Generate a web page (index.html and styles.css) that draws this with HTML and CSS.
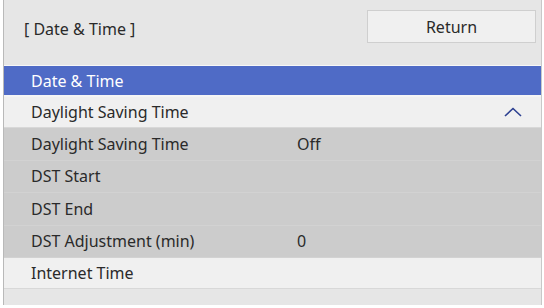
FILE: index.html
```html
<!doctype html>
<html lang="en">
    <head>
        <meta charset="UTF-8" />
        <title>Date &amp; Time</title>
        <link rel="stylesheet" href="styles.css">
    </head>
    <body>
        <div class="panel">
            <div class="header">
                <span class="title">[ Date &amp; Time ]</span>
                <button class="return">Return</button>
            </div>
            <div class="row selected">Date &amp; Time</div>
            <div class="row open">
                <span>Daylight Saving Time</span>
                <svg class="chevron" width="18" height="10" viewBox="0 0 18 10">
                    <path d="M1 9 L9 1.5 L17 9" fill="none" stroke="#2d4191" stroke-width="1.6" />
                </svg>
            </div>
            <div class="sub">
                <div class="row item"><span class="label">Daylight Saving Time</span><span class="value">Off</span></div>
                <div class="row item"><span class="label">DST Start</span></div>
                <div class="row item"><span class="label">DST End</span></div>
                <div class="row item"><span class="label">DST Adjustment (min)</span><span class="value">0</span></div>
            </div>
            <div class="row">Internet Time</div>
            <div class="footer"></div>
        </div>
    </body>
</html>
```

FILE: styles.css
```css
body {
    margin: 0;
    background-color: #ffffff;
    font-family: "Noto Sans", "Open Sans", sans-serif;
    font-size: 16px;
    color: #2a2a2a;
}
.panel {
    width: 537px;
    height: 305px;
    margin-left: 3px;
    background-color: #e6e6e6;
    border-left: 1px solid #b9b9b9;
    border-right: 1px solid #c8c8c8;
    display: flex;
    flex-direction: column;
}
.header {
    height: 65px;
    display: flex;
    justify-content: space-between;
    align-items: flex-start;
    border-bottom: 1px solid #f7f7f7;
}
.title {
    margin: 18px 0 0 20px;
}
.return {
    margin: 10px 5px 0 0;
    width: 169px;
    height: 33px;
    background-color: #f0f0f0;
    border: 1px solid #cfcfcf;
    font-family: inherit;
    font-size: 16px;
    color: #2a2a2a;
}
.row {
    box-sizing: border-box;
    height: 31px;
    display: flex;
    align-items: center;
    padding-left: 27px;
    background-color: #f0f0f0;
    border-bottom: 1px solid #d8d8d8;
}
.selected {
    height: 31px;
    background-color: #4f6bc6;
    color: #ffffff;
    border-bottom: 2px solid #f5f5f5;
}
.open {
    justify-content: space-between;
    padding-right: 19px;
}
.sub .item {
    height: 32.5px;
    background-color: #cccccc;
    border-bottom: 1px solid #d2d2d2;
}
.label {
    width: 266px;
}
.footer {
    flex: 1;
}
```
